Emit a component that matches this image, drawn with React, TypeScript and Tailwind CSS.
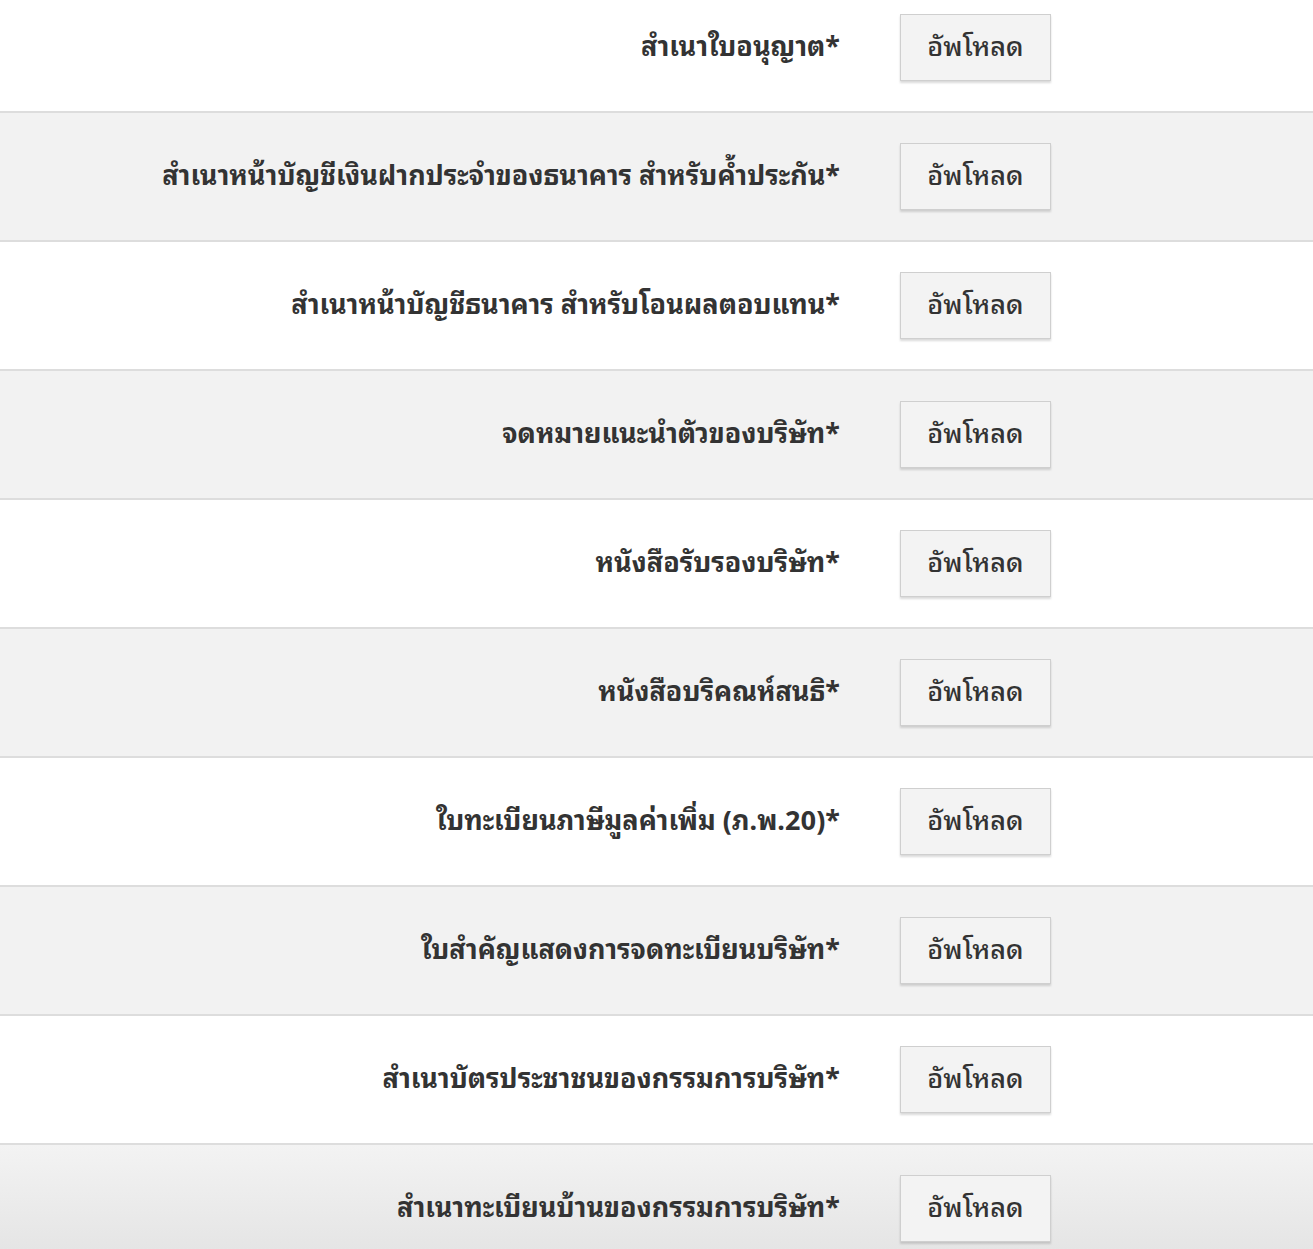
const docs = [
  "สำเนาใบอนุญาต*",
  "สำเนาหน้าบัญชีเงินฝากประจำของธนาคาร สำหรับค้ำประกัน*",
  "สำเนาหน้าบัญชีธนาคาร สำหรับโอนผลตอบแทน*",
  "จดหมายแนะนำตัวของบริษัท*",
  "หนังสือรับรองบริษัท*",
  "หนังสือบริคณห์สนธิ*",
  "ใบทะเบียนภาษีมูลค่าเพิ่ม (ภ.พ.20)*",
  "ใบสำคัญแสดงการจดทะเบียนบริษัท*",
  "สำเนาบัตรประชาชนของกรรมการบริษัท*",
  "สำเนาทะเบียนบ้านของกรรมการบริษัท*",
];

export default function App() {
  return (
    <div
      className="h-[1249px] overflow-hidden bg-white text-[#333]"
      style={{ fontFamily: '"Noto Sans Thai Looped", "Noto Sans", sans-serif' }}
    >
      <div className="-mt-[16px]">
        {docs.map((d, i) => (
          <div
            key={d}
            className={`flex h-[129px] items-center border-b-2 border-[#dddddd] ${
              i === docs.length - 1
                ? "bg-gradient-to-b from-[#f3f3f3] to-[#e2e2e2]"
                : i % 2 === 1
                ? "bg-[#f2f2f2]"
                : "bg-white"
            }`}
          >
            <div className="w-[840px] pb-[6px] text-right text-[27px] font-bold">{d}</div>
            <button className="ml-[60px] h-[67px] w-[151px] border border-[#cfcfcf] bg-[#f3f3f3] pb-[6px] text-[27px] font-medium text-[#333] shadow-[0_2px_2px_rgba(0,0,0,0.15)]">
              อัพโหลด
            </button>
          </div>
        ))}
      </div>
    </div>
  );
}
